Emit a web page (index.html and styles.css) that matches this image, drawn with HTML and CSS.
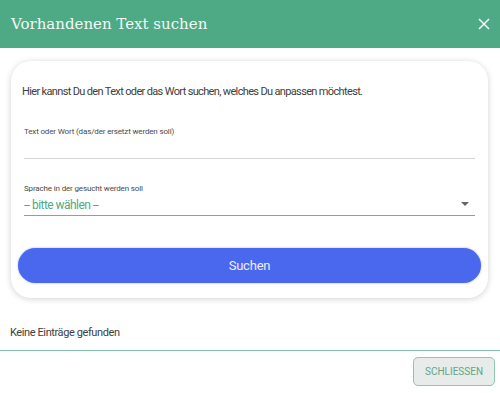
FILE: index.html
```html
<!DOCTYPE html>
<html lang="de">
<head>
<meta charset="utf-8">
<link rel="stylesheet" href="styles.css">
</head>
<body>
<div class="dialog">
  <header class="header">
    <h1 class="title">Vorhandenen Text suchen</h1>
    <button class="close" aria-label="Schließen">
      <svg width="12" height="12" viewBox="0 0 12 12"><path d="M1 1L11 11M11 1L1 11" stroke="#f4fbf7" stroke-width="1.5" fill="none"/></svg>
    </button>
  </header>
  <main class="content">
    <section class="card">
      <p class="intro">Hier kannst Du den Text oder das Wort suchen, welches Du anpassen möchtest.</p>
      <div class="field field-text">
        <label class="label">Text oder Wort (das/der ersetzt werden soll)</label>
        <div class="input"></div>
      </div>
      <div class="field field-select">
        <label class="label">Sprache in der gesucht werden soll</label>
        <div class="select">
          <span class="select-value">-- bitte wählen --</span>
          <svg class="arrow" width="8" height="4" viewBox="0 0 8 4"><path d="M0 0H8L4 4Z" fill="#666"/></svg>
        </div>
      </div>
      <button class="search">Suchen</button>
    </section>
    <p class="empty">Keine Einträge gefunden</p>
  </main>
  <footer class="footer">
    <button class="closebtn">SCHLIESSEN</button>
  </footer>
</div>
</body>
</html>
```
FILE: styles.css
```css
* { box-sizing: border-box; }
html, body { margin: 0; padding: 0; background: #fff; }
body { font-family: "Roboto", "Noto Sans", sans-serif; width: 500px; height: 393px; overflow: hidden; }
.dialog { display: flex; flex-direction: column; }
.header {
  height: 48px; background: #4daa84; display: flex; align-items: center;
  justify-content: space-between; padding: 0 10px 0 11px;
}
.title { margin: 0; font-family: "DejaVu Serif", serif; font-weight: normal; font-size: 15px; color: #f2faf6; }
.close { background: none; border: 0; padding: 0; display: flex; width: 12px; height: 12px; }
.content { padding: 13px 12px 0 11px; }
.card {
  background: #fff; border-radius: 20px; box-shadow: 0 1px 6px rgba(0,0,0,0.18);
  padding: 23px 7px 15px 7px;
}
.intro { margin: 0 0 0 4px; font-size: 11px; color: #404040; letter-spacing: -0.65px; line-height: 16px; }
.field { margin: 0 6px 0 6px; }
.field-text { margin-top: 26px; }
.label { display: block; font-size: 8px; color: #4a4a4a; letter-spacing: -0.15px; line-height: 12px; }
.input { height: 21px; border-bottom: 1px solid #d4d4d4; }
.field-select { margin-top: 24px; }
.select { display: flex; align-items: center; justify-content: space-between; height: 21px; border-bottom: 1px solid #9a9a9a; padding-right: 6px; }
.select-value { color: #4daa84; font-size: 12px; letter-spacing: -0.55px; }
.arrow { margin-top: -2px; }
.search {
  display: block; width: 100%; margin-top: 32px; height: 35px; border: 0; border-radius: 18px;
  background: #4a68ee; color: #eef; font-family: inherit; font-size: 13px; letter-spacing: -0.2px;
  box-shadow: 0 0 2px rgba(74,104,238,0.6);
}
.empty { margin: 27px 0 0 -1px; font-size: 11px; color: #404040; letter-spacing: -0.4px; line-height: 16px; padding-bottom: 9px; }
.footer { border-top: 1px solid #84c4ab; display: flex; justify-content: flex-end; padding: 6px 5px 0 0; }
.closebtn {
  width: 82px; height: 29px; background: #e7ebe9; border: 1px solid #8fc6ae; border-radius: 5px;
  color: #62a687; font-family: inherit; font-size: 10px; letter-spacing: 0;
}
```
